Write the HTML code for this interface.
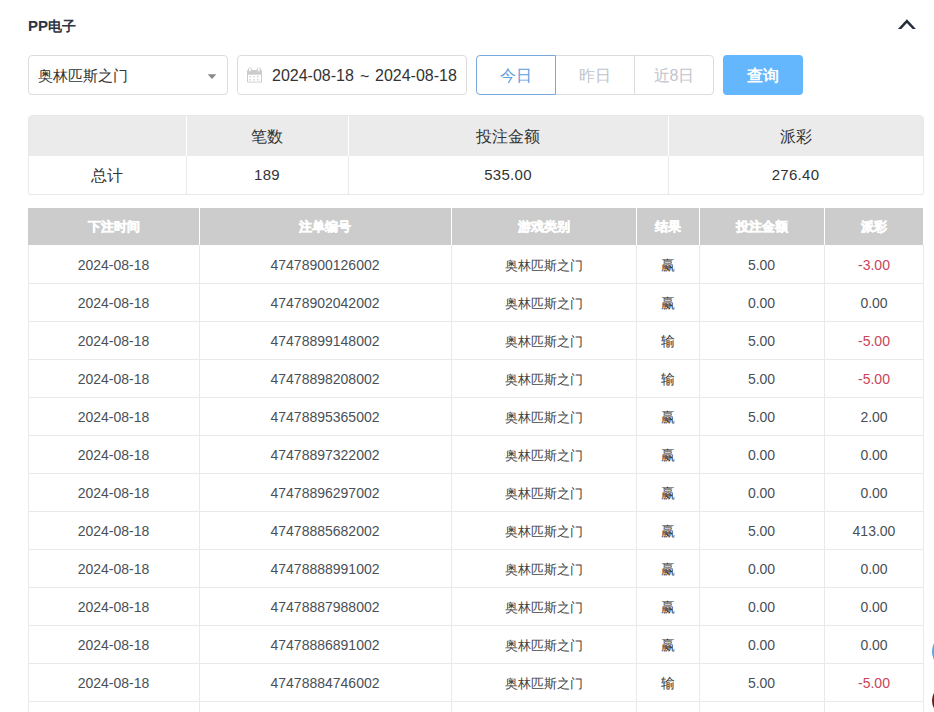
<!DOCTYPE html>
<html><head><meta charset="utf-8"><style>
html,body{margin:0;padding:0;background:#fff;width:934px;height:712px;overflow:hidden;position:relative;font-family:"Liberation Sans",sans-serif;color:#333;}
.abs{position:absolute}
.title{position:absolute;left:28px;top:17px;font-size:15px;font-weight:bold;color:#2c3442;line-height:20px}
.box{position:absolute;box-sizing:border-box;border:1px solid #dcdcdc;border-radius:4px;background:#fff}
.sel{left:28px;top:55px;width:200px;height:40px}
.date{left:237px;top:55px;width:230px;height:40px}
.txt{position:absolute;font-size:15px;line-height:20px;color:#333}
.rb{position:absolute;top:55px;height:40px;box-sizing:border-box;border:1px solid #dcdcdc;font-size:16px;line-height:40px;text-align:center;color:#c0c4cc;background:#fff}
.qbtn{position:absolute;left:723px;top:55px;width:80px;height:40px;border-radius:4px;background:#64b6fd;color:#fff;font-size:16px;line-height:42px;text-align:center;font-weight:bold}
.sum{position:absolute;left:28px;top:115px;width:896px;height:80px;box-sizing:border-box;border:1px solid #e9e9e9;border-radius:4px 4px 2px 2px;overflow:hidden}
.sumh{position:absolute;left:0;top:0;width:100%;height:40px;background:#ebebeb}
.sc{position:absolute;text-align:center;font-size:16px;line-height:20px;color:#333}
.scn{font-size:15px;letter-spacing:0.3px}
.mh{position:absolute;left:28px;top:208px;width:895px;height:37px;background:#cccccc}
.h{position:absolute;top:208px;height:37px;line-height:37px;text-align:center;color:#fff;font-weight:bold;font-size:13px;-webkit-text-stroke:0.5px #fff}
.row{position:absolute;left:0;width:934px;height:38px}
.row .c{position:absolute;top:0;height:38px;line-height:40px;text-align:center;color:#333}
.row .num{font-size:14px;color:#4a4f57}
.row .cj{font-size:13px;line-height:42px;color:#444}
.row .rs{font-size:14px;line-height:41px}
.row:after{content:"";position:absolute;left:28px;width:896px;top:38px;height:1px;background:#e9e9e9}
.neg{color:#c9445c !important}
.vl{position:absolute;top:245px;height:480px;width:1px;background:#e9e9e9}
.vlh{position:absolute;top:208px;height:37px;width:1px;background:#fff}

</style></head><body>
<div class="title"><span style="position:relative;top:-1px">PP</span><span style="font-size:14px;position:relative;top:-1px">电子</span></div>
<svg class="abs" style="left:885px;top:10px" width="45" height="30" viewBox="0 0 45 30"><path d="M21.9 9.3 L30.9 18.9 L27.6 18.9 L21.9 12.9 L16.3 18.9 L12.9 18.9 Z" fill="#262e3c"/></svg>

<div class="box sel"></div>
<div class="txt" style="left:38px;top:66px">奥林匹斯之门</div>
<svg class="abs" style="left:207px;top:73px" width="10" height="7" viewBox="0 0 10 7"><path d="M0.6 1.2 L9.4 1.2 L5 6 Z" fill="#8a8a8a"/></svg>

<div class="box date"></div>
<svg class="abs" style="left:244px;top:64px" width="22" height="22" viewBox="0 0 22 22">
<rect x="3" y="6" width="15" height="12.5" rx="1" fill="#cccccc"/>
<rect x="4" y="3.4" width="4" height="5" rx="2" fill="#cccccc"/><rect x="12.8" y="3.4" width="4" height="5" rx="2" fill="#cccccc"/>
<ellipse cx="6" cy="5.6" rx="0.9" ry="1.9" fill="#fff"/><ellipse cx="14.8" cy="5.6" rx="0.9" ry="1.9" fill="#fff"/>
<rect x="4" y="10.7" width="13" height="6.9" fill="#fff"/>
<rect x="5.5" y="12" width="1.5" height="1.5" fill="#d8d8d8"/><rect x="9.3" y="12" width="1.5" height="1.5" fill="#d8d8d8"/><rect x="13" y="12" width="1.5" height="1.5" fill="#d8d8d8"/>
<rect x="5.5" y="15" width="1.5" height="1.5" fill="#d8d8d8"/><rect x="9.3" y="15" width="1.5" height="1.5" fill="#d8d8d8"/><rect x="13" y="15" width="1.5" height="1.5" fill="#d8d8d8"/>
</svg>
<div class="txt" style="left:272px;top:66px;font-size:16px">2024-08-18</div><div class="txt" style="left:360px;top:67px;font-size:16px">~</div><div class="txt" style="left:375px;top:66px;font-size:16px">2024-08-18</div>

<div class="rb" style="left:476px;width:80px;border-color:#78a8dc;color:#5a9ee0;border-radius:4px 0 0 4px;z-index:2">今日</div>
<div class="rb" style="left:555px;width:80px">昨日</div>
<div class="rb" style="left:634px;width:80px;border-radius:0 4px 4px 0">近8日</div>
<div class="qbtn">查询</div>

<div class="sum"><div class="sumh"></div>
<div class="abs" style="left:157px;top:0;width:1px;height:40px;background:#fff"></div>
<div class="abs" style="left:319px;top:0;width:1px;height:40px;background:#fff"></div>
<div class="abs" style="left:639px;top:0;width:1px;height:40px;background:#fff"></div>
<div class="abs" style="left:157px;top:40px;width:1px;height:40px;background:#e9e9e9"></div>
<div class="abs" style="left:319px;top:40px;width:1px;height:40px;background:#e9e9e9"></div>
<div class="abs" style="left:639px;top:40px;width:1px;height:40px;background:#e9e9e9"></div>
</div>
<div class="sc" style="left:186px;width:162px;top:127px">笔数</div>
<div class="sc" style="left:348px;width:320px;top:127px">投注金额</div>
<div class="sc" style="left:668px;width:255px;top:127px">派彩</div>
<div class="sc" style="left:28px;width:158px;top:166px">总计</div>
<div class="sc scn" style="left:186px;width:162px;top:165px">189</div>
<div class="sc scn" style="left:348px;width:320px;top:165px">535.00</div>
<div class="sc scn" style="left:668px;width:255px;top:165px">276.40</div>

<div class="mh"></div>
<div class="h" style="left:28px;width:171px">下注时间</div><div class="h" style="left:199px;width:252px">注单编号</div><div class="h" style="left:451px;width:185px">游戏类别</div><div class="h" style="left:636px;width:63px">结果</div><div class="h" style="left:699px;width:125px">投注金额</div><div class="h" style="left:824px;width:100px">派彩</div>
<div class="row" style="top:245px"><div class="c num" style="left:28px;width:171px">2024-08-18</div><div class="c num" style="left:199px;width:252px">47478900126002</div><div class="c cj" style="left:451px;width:185px">奥林匹斯之门</div><div class="c rs" style="left:636px;width:63px">赢</div><div class="c num" style="left:699px;width:125px">5.00</div><div class="c num neg" style="left:824px;width:100px">-3.00</div></div>
<div class="row" style="top:283px"><div class="c num" style="left:28px;width:171px">2024-08-18</div><div class="c num" style="left:199px;width:252px">47478902042002</div><div class="c cj" style="left:451px;width:185px">奥林匹斯之门</div><div class="c rs" style="left:636px;width:63px">赢</div><div class="c num" style="left:699px;width:125px">0.00</div><div class="c num" style="left:824px;width:100px">0.00</div></div>
<div class="row" style="top:321px"><div class="c num" style="left:28px;width:171px">2024-08-18</div><div class="c num" style="left:199px;width:252px">47478899148002</div><div class="c cj" style="left:451px;width:185px">奥林匹斯之门</div><div class="c rs" style="left:636px;width:63px">输</div><div class="c num" style="left:699px;width:125px">5.00</div><div class="c num neg" style="left:824px;width:100px">-5.00</div></div>
<div class="row" style="top:359px"><div class="c num" style="left:28px;width:171px">2024-08-18</div><div class="c num" style="left:199px;width:252px">47478898208002</div><div class="c cj" style="left:451px;width:185px">奥林匹斯之门</div><div class="c rs" style="left:636px;width:63px">输</div><div class="c num" style="left:699px;width:125px">5.00</div><div class="c num neg" style="left:824px;width:100px">-5.00</div></div>
<div class="row" style="top:397px"><div class="c num" style="left:28px;width:171px">2024-08-18</div><div class="c num" style="left:199px;width:252px">47478895365002</div><div class="c cj" style="left:451px;width:185px">奥林匹斯之门</div><div class="c rs" style="left:636px;width:63px">赢</div><div class="c num" style="left:699px;width:125px">5.00</div><div class="c num" style="left:824px;width:100px">2.00</div></div>
<div class="row" style="top:435px"><div class="c num" style="left:28px;width:171px">2024-08-18</div><div class="c num" style="left:199px;width:252px">47478897322002</div><div class="c cj" style="left:451px;width:185px">奥林匹斯之门</div><div class="c rs" style="left:636px;width:63px">赢</div><div class="c num" style="left:699px;width:125px">0.00</div><div class="c num" style="left:824px;width:100px">0.00</div></div>
<div class="row" style="top:473px"><div class="c num" style="left:28px;width:171px">2024-08-18</div><div class="c num" style="left:199px;width:252px">47478896297002</div><div class="c cj" style="left:451px;width:185px">奥林匹斯之门</div><div class="c rs" style="left:636px;width:63px">赢</div><div class="c num" style="left:699px;width:125px">0.00</div><div class="c num" style="left:824px;width:100px">0.00</div></div>
<div class="row" style="top:511px"><div class="c num" style="left:28px;width:171px">2024-08-18</div><div class="c num" style="left:199px;width:252px">47478885682002</div><div class="c cj" style="left:451px;width:185px">奥林匹斯之门</div><div class="c rs" style="left:636px;width:63px">赢</div><div class="c num" style="left:699px;width:125px">5.00</div><div class="c num" style="left:824px;width:100px">413.00</div></div>
<div class="row" style="top:549px"><div class="c num" style="left:28px;width:171px">2024-08-18</div><div class="c num" style="left:199px;width:252px">47478888991002</div><div class="c cj" style="left:451px;width:185px">奥林匹斯之门</div><div class="c rs" style="left:636px;width:63px">赢</div><div class="c num" style="left:699px;width:125px">0.00</div><div class="c num" style="left:824px;width:100px">0.00</div></div>
<div class="row" style="top:587px"><div class="c num" style="left:28px;width:171px">2024-08-18</div><div class="c num" style="left:199px;width:252px">47478887988002</div><div class="c cj" style="left:451px;width:185px">奥林匹斯之门</div><div class="c rs" style="left:636px;width:63px">赢</div><div class="c num" style="left:699px;width:125px">0.00</div><div class="c num" style="left:824px;width:100px">0.00</div></div>
<div class="row" style="top:625px"><div class="c num" style="left:28px;width:171px">2024-08-18</div><div class="c num" style="left:199px;width:252px">47478886891002</div><div class="c cj" style="left:451px;width:185px">奥林匹斯之门</div><div class="c rs" style="left:636px;width:63px">赢</div><div class="c num" style="left:699px;width:125px">0.00</div><div class="c num" style="left:824px;width:100px">0.00</div></div>
<div class="row" style="top:663px"><div class="c num" style="left:28px;width:171px">2024-08-18</div><div class="c num" style="left:199px;width:252px">47478884746002</div><div class="c cj" style="left:451px;width:185px">奥林匹斯之门</div><div class="c rs" style="left:636px;width:63px">输</div><div class="c num" style="left:699px;width:125px">5.00</div><div class="c num neg" style="left:824px;width:100px">-5.00</div></div>
<div class="row" style="top:701px"><div class="c num" style="left:28px;width:171px">2024-08-18</div><div class="c num" style="left:199px;width:252px">47478884746002</div><div class="c cj" style="left:451px;width:185px">奥林匹斯之门</div><div class="c rs" style="left:636px;width:63px">输</div><div class="c num" style="left:699px;width:125px">5.00</div><div class="c num neg" style="left:824px;width:100px">-5.00</div></div>

<div class="vl" style="left:199px"></div><div class="vlh" style="left:199px"></div><div class="vl" style="left:451px"></div><div class="vlh" style="left:451px"></div><div class="vl" style="left:636px"></div><div class="vlh" style="left:636px"></div><div class="vl" style="left:699px"></div><div class="vlh" style="left:699px"></div><div class="vl" style="left:824px"></div><div class="vlh" style="left:824px"></div>
<div class="vl" style="left:28px"></div><div class="vl" style="left:923px"></div>

<div class="abs" style="left:932px;top:633px;width:37px;height:37px;border-radius:50%;background:#5aa8e8"></div>
<div class="abs" style="left:932px;top:685px;width:31px;height:31px;border-radius:50%;background:#6b1a1a"></div>

</body></html>
